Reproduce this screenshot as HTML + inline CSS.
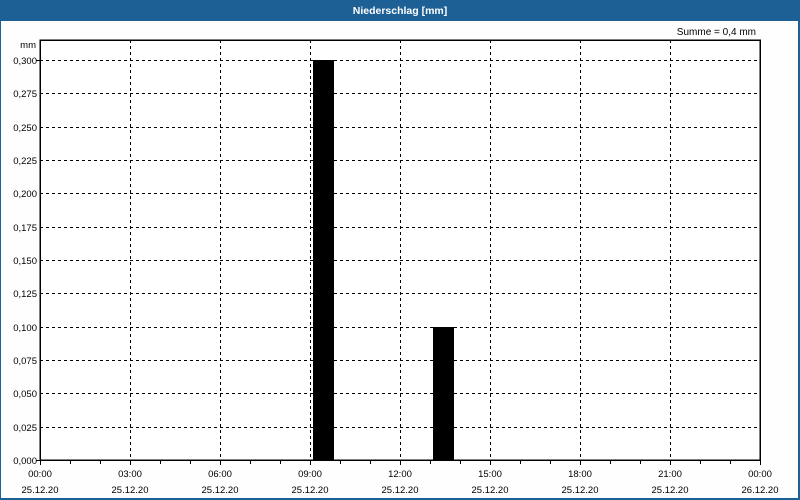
<!DOCTYPE html>
<html><head><meta charset="utf-8"><style>
html,body{margin:0;padding:0;width:800px;height:500px;overflow:hidden;background:#fff;}
svg{display:block;font-family:"Liberation Sans",sans-serif;}
</style></head><body>
<svg width="800" height="500" xmlns="http://www.w3.org/2000/svg" shape-rendering="crispEdges">
<rect x="0" y="0" width="800" height="500" fill="#fdfefd"/>
<rect x="0" y="0" width="800" height="21" fill="#1d6096"/>
<rect x="0" y="0" width="1" height="500" fill="#1d6096"/>
<rect x="798" y="0" width="2" height="500" fill="#1d6096"/>
<rect x="0" y="498" width="800" height="2" fill="#1d6096"/>
<text x="400" y="14" text-anchor="middle" fill="#fff" font-size="10.5" font-weight="bold">Niederschlag [mm]</text>
<text x="756" y="35" text-anchor="end" fill="#000" font-size="10">Summe = 0,4 mm</text>
<rect x="40" y="40" width="720" height="420" fill="#fff"/>
<g stroke="#000" stroke-width="1" stroke-dasharray="3,3">
<line x1="40" y1="60.5" x2="760" y2="60.5"/>
<line x1="40" y1="93.5" x2="760" y2="93.5"/>
<line x1="40" y1="127.5" x2="760" y2="127.5"/>
<line x1="40" y1="160.5" x2="760" y2="160.5"/>
<line x1="40" y1="193.5" x2="760" y2="193.5"/>
<line x1="40" y1="227.5" x2="760" y2="227.5"/>
<line x1="40" y1="260.5" x2="760" y2="260.5"/>
<line x1="40" y1="293.5" x2="760" y2="293.5"/>
<line x1="40" y1="327.5" x2="760" y2="327.5"/>
<line x1="40" y1="360.5" x2="760" y2="360.5"/>
<line x1="40" y1="393.5" x2="760" y2="393.5"/>
<line x1="40" y1="427.5" x2="760" y2="427.5"/>
<line x1="130.5" y1="40" x2="130.5" y2="460"/>
<line x1="220.5" y1="40" x2="220.5" y2="460"/>
<line x1="310.5" y1="40" x2="310.5" y2="460"/>
<line x1="400.5" y1="40" x2="400.5" y2="460"/>
<line x1="490.5" y1="40" x2="490.5" y2="460"/>
<line x1="580.5" y1="40" x2="580.5" y2="460"/>
<line x1="670.5" y1="40" x2="670.5" y2="460"/>
</g>
<rect x="313" y="60" width="21" height="400" fill="#000"/>
<rect x="433" y="327" width="21" height="133" fill="#000"/>
<rect x="40" y="40" width="720" height="420" fill="none" stroke="#000" stroke-width="1.5"/>
<g stroke="#000" stroke-width="1">
<line x1="40.5" y1="460" x2="40.5" y2="465"/><line x1="70.5" y1="460" x2="70.5" y2="464"/><line x1="100.5" y1="460" x2="100.5" y2="464"/><line x1="130.5" y1="460" x2="130.5" y2="465"/><line x1="160.5" y1="460" x2="160.5" y2="464"/><line x1="190.5" y1="460" x2="190.5" y2="464"/><line x1="220.5" y1="460" x2="220.5" y2="465"/><line x1="250.5" y1="460" x2="250.5" y2="464"/><line x1="280.5" y1="460" x2="280.5" y2="464"/><line x1="310.5" y1="460" x2="310.5" y2="465"/><line x1="340.5" y1="460" x2="340.5" y2="464"/><line x1="370.5" y1="460" x2="370.5" y2="464"/><line x1="400.5" y1="460" x2="400.5" y2="465"/><line x1="430.5" y1="460" x2="430.5" y2="464"/><line x1="460.5" y1="460" x2="460.5" y2="464"/><line x1="490.5" y1="460" x2="490.5" y2="465"/><line x1="520.5" y1="460" x2="520.5" y2="464"/><line x1="550.5" y1="460" x2="550.5" y2="464"/><line x1="580.5" y1="460" x2="580.5" y2="465"/><line x1="610.5" y1="460" x2="610.5" y2="464"/><line x1="640.5" y1="460" x2="640.5" y2="464"/><line x1="670.5" y1="460" x2="670.5" y2="465"/><line x1="700.5" y1="460" x2="700.5" y2="464"/><line x1="730.5" y1="460" x2="730.5" y2="464"/><line x1="760.5" y1="460" x2="760.5" y2="465"/>
<line x1="36" y1="60.5" x2="40" y2="60.5"/><line x1="36" y1="460.5" x2="40" y2="460.5"/>
</g>
<g font-size="9.5" fill="#000" text-anchor="end">
<text x="36" y="48">mm</text>
<text x="37" y="64">0,300</text>
<text x="37" y="97">0,275</text>
<text x="37" y="131">0,250</text>
<text x="37" y="164">0,225</text>
<text x="37" y="197">0,200</text>
<text x="37" y="231">0,175</text>
<text x="37" y="264">0,150</text>
<text x="37" y="297">0,125</text>
<text x="37" y="331">0,100</text>
<text x="37" y="364">0,075</text>
<text x="37" y="397">0,050</text>
<text x="37" y="431">0,025</text>
<text x="37" y="464">0,000</text>
</g>
<g font-size="9.5" fill="#000" text-anchor="middle">
<text x="40" y="477">00:00</text><text x="40" y="493">25.12.20</text>
<text x="130" y="477">03:00</text><text x="130" y="493">25.12.20</text>
<text x="220" y="477">06:00</text><text x="220" y="493">25.12.20</text>
<text x="310" y="477">09:00</text><text x="310" y="493">25.12.20</text>
<text x="400" y="477">12:00</text><text x="400" y="493">25.12.20</text>
<text x="490" y="477">15:00</text><text x="490" y="493">25.12.20</text>
<text x="580" y="477">18:00</text><text x="580" y="493">25.12.20</text>
<text x="670" y="477">21:00</text><text x="670" y="493">25.12.20</text>
<text x="760" y="477">00:00</text><text x="760" y="493">26.12.20</text>
</g>
</svg>
</body></html>
